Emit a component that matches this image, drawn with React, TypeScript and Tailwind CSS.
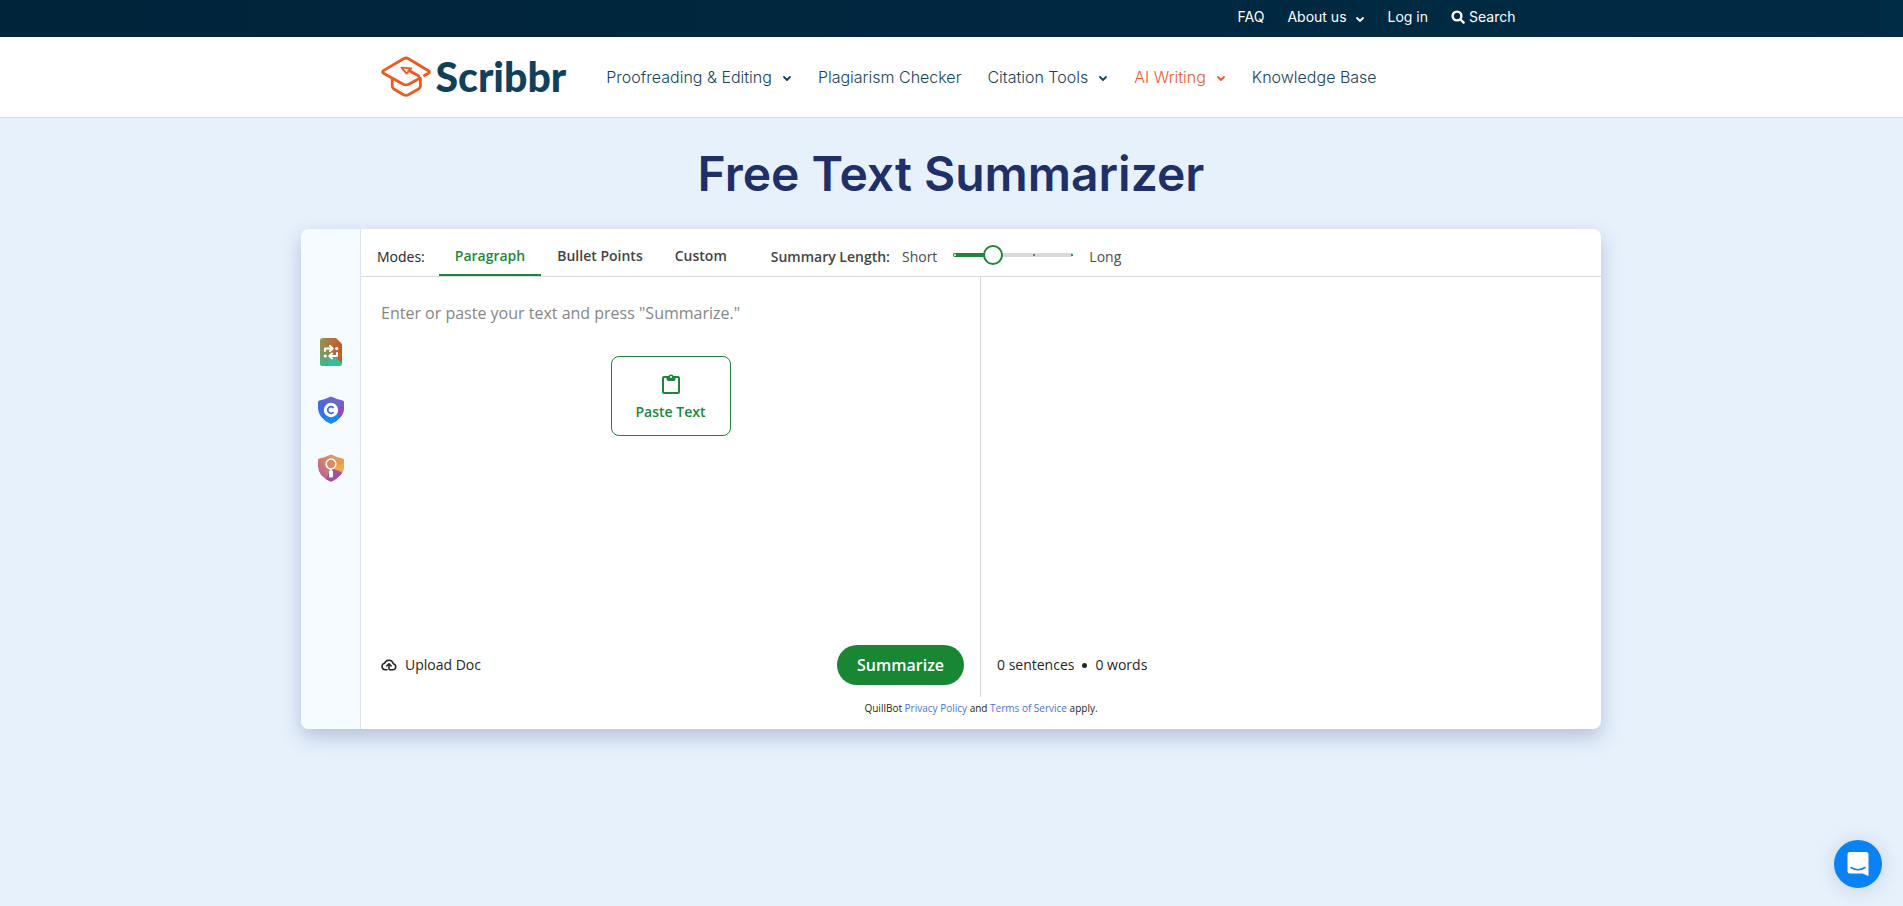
import { useState } from "react";
import type { ReactNode } from "react";

function Chevron({ className = "" }: { className?: string }) {
  return (
    <svg viewBox="0 0 10 10" className={`size-[10px] shrink-0 ${className}`} fill="none" stroke="currentColor" strokeWidth="1.8" strokeLinecap="round" strokeLinejoin="round" aria-hidden="true">
      <path d="M2 4 L5 7 L8 4" />
    </svg>
  );
}

function ScribbrLogo() {
  return (
    <a href="#" className="flex items-center gap-[5px] text-[#10405c]">
      <svg viewBox="0 0 50 42" className="h-[42px] w-[50px]" fill="none" stroke="#ea5b21" strokeWidth="2.8" strokeLinecap="round" strokeLinejoin="round" aria-hidden="true">
        <path d="M43.5 19.5 L47.8 17 Q49.2 16 47.8 15 L27.5 2.7 Q25 1.3 22.5 2.7 L2.4 14.6 Q0.8 16 2.4 17.2 L22.3 28.3 Q25 29.6 27.7 28.3 L36.5 23.6 Q39.6 21.6 36.9 19.4 L28 14.6" />
        <path d="M11.2 22.7 V30 Q11.2 32 12.8 33 L22.6 38.8 Q25 40 27.4 38.8 L37.6 33 Q39.4 31.8 39.4 30 V22.5" />
        <path d="M20.4 11.7 L30.2 12.3 L25.6 17.6 Z" strokeWidth="1.8" />
      </svg>
      <span className="font-['Lato',sans-serif] text-[41px] leading-[42px] font-black">Scribbr</span>
    </a>
  );
}

function NavLink({ children, menu = false, active = false }: { children: ReactNode; menu?: boolean; active?: boolean }) {
  return (
    <a href="#" className={`flex items-center gap-2.5 ${active ? "text-[#f0592b]" : "text-[#16435c]"}`}>
      <span className="font-light">{children}</span>
      {menu && <Chevron className="mt-0.5" />}
    </a>
  );
}

function ParaphraserIcon() {
  return (
    <svg viewBox="0 0 22 28" className="h-7 w-[22px]" aria-hidden="true">
      <defs>
        <linearGradient id="pa" x1="0" y1="0.2" x2="1" y2="0.3">
          <stop offset="0" stopColor="#8f9657" />
          <stop offset="0.5" stopColor="#b0733c" />
          <stop offset="1" stopColor="#cf5822" />
        </linearGradient>
        <linearGradient id="pb" x1="0" y1="0" x2="0" y2="1">
          <stop offset="0.35" stopColor="#3fb892" stopOpacity="0" />
          <stop offset="1" stopColor="#35b795" />
        </linearGradient>
        <clipPath id="pc"><path d="M3 0 H16 L22 6 V25 Q22 28 19 28 H3 Q0 28 0 25 V3 Q0 0 3 0 Z" /></clipPath>
      </defs>
      <g clipPath="url(#pc)">
        <rect width="22" height="28" fill="url(#pa)" />
        <path d="M0 0 H5 L22 28 H0 Z" fill="url(#pb)" />
        <path d="M11 16 L22 25 V28 H7 Z" fill="#38bd99" />
      </g>
      <g fill="none" stroke="#fff" strokeWidth="2" strokeLinecap="round" strokeLinejoin="round">
        <path d="M5 13 V10.5 H11.5 M10 8 L12.7 10.5 L10 13" />
        <path d="M17 15 V18 H10.5 M12 15.5 L9.3 18 L12 20.5" />
      </g>
      <circle cx="16.7" cy="10.5" r="1.6" fill="#fff" />
      <circle cx="5.3" cy="18" r="1.6" fill="#fff" />
    </svg>
  );
}

const SHIELD = "M13 0.5 Q19 3.4 24.6 4.4 Q26 4.7 26 6 V12.5 Q25.6 22.6 13 27.8 Q0.4 22.6 0 12.5 V6 Q0 4.7 1.4 4.4 Q7 3.4 13 0.5 Z";

function PlagiarismIcon() {
  return (
    <svg viewBox="0 0 26 28" className="h-7 w-[26px]" aria-hidden="true">
      <defs>
        <linearGradient id="sa" x1="0.2" y1="1" x2="0.7" y2="0.1">
          <stop offset="0" stopColor="#1682f2" />
          <stop offset="0.55" stopColor="#4c68d8" />
          <stop offset="1" stopColor="#7764c8" />
        </linearGradient>
        <clipPath id="sc"><path d={SHIELD} /></clipPath>
      </defs>
      <g clipPath="url(#sc)">
        <rect width="26" height="28" fill="url(#sa)" />
        <path d="M13 14 L26 10 V19 L21 22 Z" fill="#9348c0" />
        <path d="M13 14 L22 21 L16 28 H4 Z" fill="#1589f5" />
      </g>
      <circle cx="13" cy="14" r="7.2" fill="#fff" />
      <path d="M15.6 11.9 A3.3 3.3 0 1 0 15.6 16.1" fill="none" stroke="#4568d2" strokeWidth="1.7" />
    </svg>
  );
}

function DetectorIcon() {
  return (
    <svg viewBox="0 0 26 28" className="h-7 w-[26px]" aria-hidden="true">
      <defs>
        <linearGradient id="da" x1="0" y1="0.8" x2="0.8" y2="0.2">
          <stop offset="0" stopColor="#b95c96" />
          <stop offset="0.5" stopColor="#d18173" />
          <stop offset="1" stopColor="#e69b50" />
        </linearGradient>
        <clipPath id="dc"><path d={SHIELD} /></clipPath>
      </defs>
      <g clipPath="url(#dc)">
        <rect width="26" height="28" fill="url(#da)" />
        <path d="M13 14 L26 9 V18 Z" fill="#f0a94b" />
        <path d="M13 14 L25 19 L14 28 H7 Z" fill="#a54e9e" />
      </g>
      <circle cx="13" cy="10" r="4.9" fill="none" stroke="#fff" strokeWidth="1.5" />
      <rect x="12.2" y="14.6" width="1.6" height="3" fill="#fff" />
      <rect x="11" y="16.4" width="4" height="7" rx="1" fill="#fff" />
    </svg>
  );
}

function ClipboardIcon() {
  return (
    <svg viewBox="0 0 18 20" className="h-5 w-[18px]" fill="none" stroke="currentColor" aria-hidden="true">
      <rect x="1" y="3" width="16" height="16" rx="1" strokeWidth="2" />
      <path d="M4.5 2.5 H6.2 A3 3 0 0 1 11.8 2.5 H13.5 V5 Q13.5 7 11.5 7 H6.5 Q4.5 7 4.5 5 Z" fill="currentColor" stroke="none" />
      <circle cx="9" cy="2.9" r="1" fill="#fff" stroke="none" />
    </svg>
  );
}

function CloudUploadIcon() {
  return (
    <svg viewBox="0 0 24 24" className="size-4" fill="none" stroke="currentColor" strokeWidth="2.3" strokeLinecap="round" strokeLinejoin="round" aria-hidden="true">
      <path d="M9 19 H6.2 A4.9 4.9 0 0 1 5.5 9.3 A6.7 6.7 0 0 1 18.4 10 A4.6 4.6 0 0 1 18.5 19 H13 Q12 19 12 18 V11" />
      <path d="M8.8 13.4 L12 10.4 L15.2 13.4" />
    </svg>
  );
}

const MODES = ["Paragraph", "Bullet Points", "Custom"];

function LengthSlider() {
  const [value, setValue] = useState(1);
  return (
    <div className="relative flex h-5 w-[140px] items-center px-2.5">
      <div className="relative h-1 w-full rounded-full bg-[#d8dad9]">
        <div className="h-1 rounded-full bg-[#1d863b]" style={{ width: `${(value / 3) * 100}%` }} />
        <i className="absolute top-px left-px size-0.5 rounded-full bg-white" />
        <i className="absolute top-px left-2/3 size-0.5 bg-[#6c7a70]" />
        <i className="absolute top-px right-0 size-0.5 bg-[#2d8c5c]" />
      </div>
      <input
        id="length"
        type="range"
        min={0}
        max={3}
        step={1}
        value={value}
        onChange={(e) => setValue(Number(e.target.value))}
        className="absolute inset-0 h-5 w-full cursor-pointer appearance-none bg-transparent [&::-webkit-slider-thumb]:size-5 [&::-webkit-slider-thumb]:appearance-none [&::-webkit-slider-thumb]:rounded-full [&::-webkit-slider-thumb]:border-2 [&::-webkit-slider-thumb]:border-[#1d863b] [&::-webkit-slider-thumb]:bg-white"
      />
    </div>
  );
}

export default function App() {
  const [mode, setMode] = useState("Paragraph");
  return (
    <div className="min-h-screen bg-[#e7f1fc] font-['Inter',sans-serif]">
      <div className="bg-linear-to-r from-[#00243a] to-[#002b45] text-white">
        <nav aria-label="Account" className="mx-auto flex h-[37px] max-w-[1140px] items-center justify-end gap-[23px] pr-1.5 pb-1 text-sm">
          <a href="#">FAQ</a>
          <a href="#" className="flex items-center gap-2">About us <Chevron className="mt-1" /></a>
          <a href="#">Log in</a>
          <a href="#" className="flex items-center gap-1">
            <svg viewBox="0 0 14 14" className="size-3.5" fill="none" stroke="currentColor" strokeWidth="2.4" strokeLinecap="round" aria-hidden="true">
              <circle cx="6" cy="6" r="4.4" />
              <path d="M9.5 9.5 L12.6 12.6" />
            </svg>
            Search
          </a>
        </nav>
      </div>

      <header className="border-b border-[#d2dfea] bg-white">
        <div className="mx-auto flex h-20 max-w-[1142px] items-center">
          <ScribbrLogo />
          <nav aria-label="Main" className="ml-10 flex items-center gap-[26px] text-base whitespace-nowrap">
            <NavLink menu>Proofreading &amp; Editing</NavLink>
            <NavLink>Plagiarism Checker</NavLink>
            <NavLink menu>Citation Tools</NavLink>
            <NavLink menu active>AI Writing</NavLink>
            <NavLink>Knowledge Base</NavLink>
          </nav>
        </div>
      </header>

      <main className="pr-[17px] pb-16 pl-4">
        <h1 className="pt-6 text-center text-5xl leading-16 font-semibold text-[#1f2f68]">Free Text Summarizer</h1>

        <section className="mx-auto mt-[23px] flex max-w-[1300px] overflow-hidden rounded-lg bg-white font-['Open_Sans',sans-serif] text-[#252525] shadow-[0_8px_20px_rgba(30,50,110,0.25)]">
          <aside className="flex w-[60px] shrink-0 flex-col items-center gap-[30px] border-r border-[#dfe5ee] bg-[#f6fbff] pt-[109px]">
            <a href="#" aria-label="Paraphraser"><ParaphraserIcon /></a>
            <a href="#" aria-label="Plagiarism checker"><PlagiarismIcon /></a>
            <a href="#" aria-label="AI detector"><DetectorIcon /></a>
          </aside>

          <div className="min-w-0 flex-1">
            <div className="flex h-12 items-stretch border-b border-[#dadcdc] text-sm">
              <span className="self-center pt-2 pr-3.5 pl-4 font-medium">Modes:</span>
              {MODES.map((m) => (
                <button
                  key={m}
                  type="button"
                  onClick={() => setMode(m)}
                  className={`border-b-2 px-4 pt-2 font-semibold ${m === mode ? "border-[#1d863b] text-[#1d863b]" : "border-transparent text-[#444444]"}`}
                >
                  {m}
                </button>
              ))}
              <div className="flex items-center pt-2 pl-7">
                <label htmlFor="length" className="font-semibold text-[#444444]">Summary Length:</label>
                <span className="ml-3 text-[#4c4c4c]">Short</span>
                <div className="mx-1.5 pb-1"><LengthSlider /></div>
                <span className="text-[#4c4c4c]">Long</span>
              </div>
            </div>

            <div className="grid h-[420px] grid-cols-2">
              <div className="flex flex-col border-r border-[#d5d7d9]">
                <textarea
                  aria-label="Text to summarize"
                  placeholder={'Enter or paste your text and press "Summarize."'}
                  className="h-[79px] resize-none px-5 pt-6 text-base outline-none placeholder:text-[#868686]"
                />
                <button type="button" className="flex h-20 w-[120px] flex-col items-center justify-center gap-2 self-center rounded-lg border border-[#1d863b] pt-1 text-sm font-semibold text-[#1d863b]">
                  <ClipboardIcon />
                  Paste Text
                </button>
                <div className="mt-auto flex items-center justify-between pr-4 pb-3 pl-5">
                  <button type="button" className="flex items-center gap-2 text-sm font-medium">
                    <CloudUploadIcon />
                    Upload Doc
                  </button>
                  <button type="button" className="h-10 rounded-full bg-[#188633] px-5 text-base font-semibold text-white">Summarize</button>
                </div>
              </div>
              <div className="flex items-end px-4 pb-3">
                <p className="flex h-10 items-center gap-2 text-sm font-medium">
                  0 sentences <i className="size-[5px] rounded-full bg-[#252525]" /> 0 words
                </p>
              </div>
            </div>

            <p className="h-8 pt-[3px] text-center text-[10px] leading-4">
              QuillBot <a href="#" className="text-[#4a72e0]">Privacy Policy</a> and <a href="#" className="text-[#4a72e0]">Terms of Service</a> apply.
            </p>
          </div>
        </section>
      </main>

      <button type="button" aria-label="Open chat" className="fixed right-[21px] bottom-[18px] flex size-12 items-center justify-center rounded-full bg-[#0b82f4] shadow-[0_2px_20px_rgba(0,40,90,0.15)]">
        <svg viewBox="0 0 22 24" className="h-6 w-[22px]" aria-hidden="true">
          <path d="M3 0 H19 Q21.5 0 21.5 2.5 V24 Q18.5 22.5 15.5 21.5 H3 Q0.5 21.5 0.5 19 V2.5 Q0.5 0 3 0 Z" fill="#fff" />
          <path d="M4 15.5 Q11 20 18 15.5" fill="none" stroke="#0b82f4" strokeWidth="1.6" strokeLinecap="round" />
        </svg>
      </button>
    </div>
  );
}
